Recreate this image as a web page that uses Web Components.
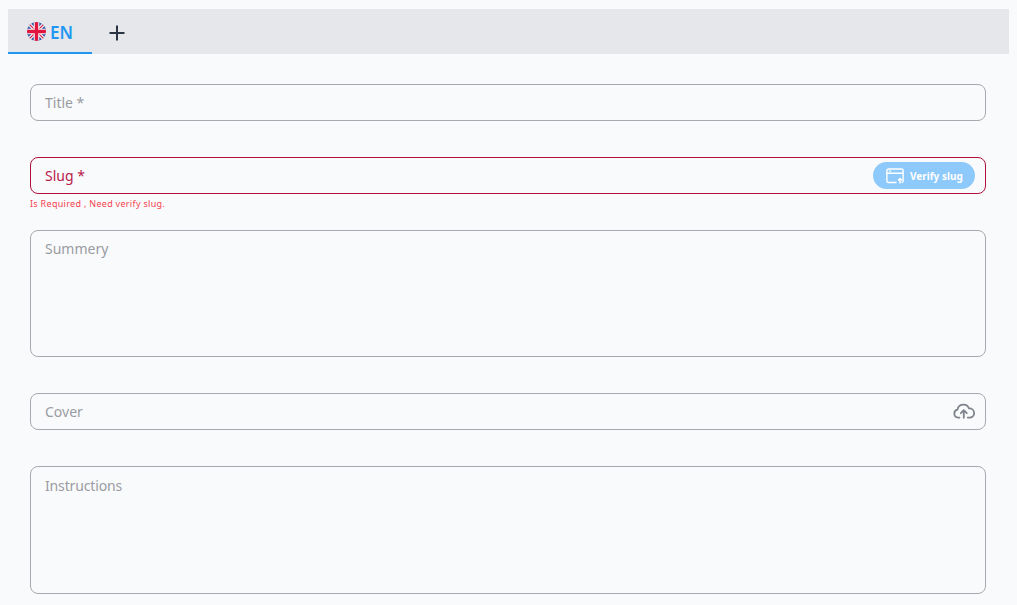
<!DOCTYPE html>
<html lang="en">
<head>
<meta charset="utf-8">
<title>Post form</title>
<style>
  html, body { height: 100%; }
  body {
    margin: 0;
    padding: 9px 8px 0;
    box-sizing: border-box;
    background: #f9fafc;
    font-family: "Noto Sans", "Open Sans", sans-serif;
    overflow: hidden;
  }
  form-panel { padding: 30px 23px 0 22px; }
</style>
</head>
<body>
<lang-tabs></lang-tabs>
<form-panel>
  <form-field label="Title *"></form-field>
  <form-field label="Slug *" error="Is Required , Need verify slug.">
    <verify-button slot="end">Verify slug</verify-button>
  </form-field>
  <form-field label="Summery" multiline></form-field>
  <form-field label="Cover">
    <svg slot="end" width="22" height="22" viewBox="0 1 22 22" fill="none" stroke="#7f838b" stroke-width="1.8" stroke-linecap="round" stroke-linejoin="round">
      <path d="M6.5 17.6H5.2a4 4 0 0 1-.7-7.9A6 6 0 0 1 16 8.4a4.6 4.6 0 0 1 1 9.2h-2.2"/>
      <path d="M10.8 17.8v-7.3M7.8 13.2l3-3 3 3"/>
    </svg>
  </form-field>
  <form-field label="Instructions" multiline tall></form-field>
</form-panel>

<script>
class LangTabs extends HTMLElement {
  constructor() {
    super();
    this.attachShadow({ mode: 'open' });
  }

  connectedCallback() {
    this.shadowRoot.innerHTML = `
      <style>
        :host {
          display: flex;
          align-items: stretch;
          height: 45px;
          background: #e5e7eb;
        }
        .tab {
          display: flex;
          align-items: center;
          gap: 4px;
          box-sizing: border-box;
          width: 84px;
          padding: 2px 0 0 19px;
          border-bottom: 2px solid #2196f3;
          color: #2196f3;
          font-size: 17px;
          font-weight: 600;
        }
        .tab span { padding-top: 1px; }
        .add {
          display: flex;
          align-items: center;
          padding: 2px 0 0 16px;
        }
      </style>
      <div class="tab">
        <svg width="19" height="19" viewBox="0 0 19 19">
          <defs><clipPath id="round"><circle cx="9.5" cy="9.5" r="9.5"/></clipPath></defs>
          <g clip-path="url(#round)">
            <rect width="19" height="19" fill="#2f55a4"/>
            <path d="M0 0 19 19M19 0 0 19" stroke="#f4f4f6" stroke-width="3.4"/>
            <path d="M0 0 19 19M19 0 0 19" stroke="#e0163f" stroke-width="1.1"/>
            <path d="M9.5 0v19M0 9.500h19" stroke="#f4f4f6" stroke-width="5.6"/>
            <path d="M9.5 0v19M0 9.500h19" stroke="#e0163f" stroke-width="3.4"/>
          </g>
        </svg>
        <span>EN</span>
      </div>
      <div class="add">
        <svg width="18" height="18" viewBox="0 0 18 18" stroke="#2b3443" stroke-width="2">
          <path d="M9 1.500v15M1.500 9h15"/>
        </svg>
      </div>
    `;
  }
}

class FormPanel extends HTMLElement {
  constructor() {
    super();
    this.attachShadow({ mode: 'open' });
  }

  connectedCallback() {
    this.shadowRoot.innerHTML = `
      <style>
        :host { display: block; }
      </style>
      <slot></slot>
    `;
  }
}

class FormField extends HTMLElement {
  constructor() {
    super();
    this.attachShadow({ mode: 'open' });
  }

  connectedCallback() {
    const label = this.getAttribute('label');
    const error = this.getAttribute('error');
    this.shadowRoot.innerHTML = `
      <style>
        :host { display: block; }
        .box {
          display: flex;
          align-items: center;
          justify-content: space-between;
          box-sizing: border-box;
          height: 37px;
          padding: 0 10px 0 14px;
          border: 1px solid #a7a9b0;
          border-radius: 8px;
          color: #999ca2;
          font-size: 14px;
        }
        :host([multiline]) .box {
          align-items: flex-start;
          height: 127px;
          padding-top: 8px;
        }
        :host([tall]) .box {
          height: 128px;
          padding-top: 9px;
          letter-spacing: -.15px;
        }
        :host([error]) .box {
          border-color: #b0123b;
          color: #b8204a;
        }
        .msg {
          height: 36px;
          padding-top: 3px;
          box-sizing: border-box;
          color: #f5424f;
          font-size: 9px;
          line-height: 13px;
          letter-spacing: .3px;
        }
        ::slotted([slot="end"]) { flex: none; }
      </style>
      <div class="box">
        <span>${label}</span>
        <slot name="end"></slot>
      </div>
      <div class="msg">${error || ''}</div>
    `;
  }
}

class VerifyButton extends HTMLElement {
  constructor() {
    super();
    this.attachShadow({ mode: 'open' });
  }

  connectedCallback() {
    this.shadowRoot.innerHTML = `
      <style>
        :host {
          display: flex;
          align-items: center;
          gap: 6px;
          box-sizing: border-box;
          width: 102px;
          height: 27px;
          padding-left: 13px;
          border-radius: 14px;
          background: #8ec9fb;
          color: #fff;
          font-size: 10px;
          font-weight: 700;
        }
      </style>
      <svg width="18" height="16" viewBox="0 0 18 16" fill="none" stroke="#fff" stroke-width="1.400" stroke-linecap="round" stroke-linejoin="round">
        <path d="M10 14.500H2.500a1.600 1.600 0 0 1-1.600-1.600V2.600A1.600 1.600 0 0 1 2.500 1h13a1.600 1.600 0 0 1 1.600 1.600v10.300a1.600 1.600 0 0 1-1 1.500"/>
        <path d="M1 5.200h16M3.500 3.100h1.200M14 15v-4.400M12.400 12l1.600-1.600 1.600 1.600"/>
      </svg>
      <slot></slot>
    `;
  }
}

customElements.define('lang-tabs', LangTabs);
customElements.define('form-panel', FormPanel);
customElements.define('form-field', FormField);
customElements.define('verify-button', VerifyButton);
</script>
</body>
</html>
